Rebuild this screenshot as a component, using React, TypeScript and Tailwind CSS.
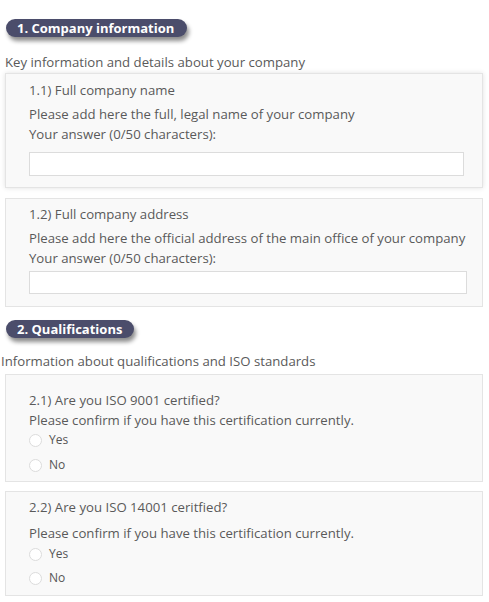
import React from "react";

const font = { fontFamily: '"Open Sans", "Liberation Sans", sans-serif' };

function Badge({ children, w }: { children: React.ReactNode; w: string }) {
  return (
    <div
      className={`ml-[6px] h-[18px] ${w} rounded-full bg-[#4b4d6b] pl-[11px] text-[13px] font-bold leading-[18px] text-white shadow-[2px_4px_4px_rgba(0,0,0,0.45)]`}
    >
      {children}
    </div>
  );
}

function Radio({ label, cls }: { label: string; cls: string }) {
  return (
    <div className={`flex h-[20px] items-center gap-[7px] ${cls}`}>
      <span className="h-[13px] w-[13px] rounded-full border border-[#dcdcdc] bg-white" />
      <span className="text-[12px] text-[#555]">{label}</span>
    </div>
  );
}

export default function App() {
  return (
    <div style={font} className="h-[602px] w-[489px] bg-white text-[13.2px] leading-[20px] text-[#5a5a5a]">
      <div className="pt-[19px]">
        <Badge w="w-[181px]">1. Company information</Badge>
      </div>
      <div className="mt-[15px] pl-[5px]">Key information and details about your company</div>

      <div className="ml-[5px] mt-[1px] w-[478px] border border-[#e4e4e4] bg-[#f9f9f9] pb-[11px] pl-[23px] pt-[6px] shadow-[0_0_5px_rgba(0,0,0,0.12)]">
        <div>1.1) Full company name</div>
        <div className="mt-[4px]">Please add here the full, legal name of your company</div>
        <div>Your answer (0/50 characters):</div>
        <div className="mt-[8px] h-[24px] w-[435px] border border-[#dcdcdc] bg-white" />
      </div>

      <div className="ml-[5px] mt-[10px] w-[478px] border border-[#e4e4e4] bg-[#f9f9f9] pb-[12px] pl-[23px] pt-[5px]">
        <div>1.2) Full company address</div>
        <div className="mt-[4px]">Please add here the official address of the main office of your company</div>
        <div>Your answer (0/50 characters):</div>
        <div className="mt-[3px] h-[23px] w-[438px] border border-[#dcdcdc] bg-white" />
      </div>

      <div className="pt-[13px]">
        <Badge w="w-[128px]">2. Qualifications</Badge>
      </div>
      <div className="mt-[13px] pl-[1px]">Information about qualifications and ISO standards</div>

      <div className="ml-[5px] mt-[3px] w-[478px] border border-[#e4e4e4] bg-[#f9f9f9] pb-[6px] pl-[23px] pt-[15px]">
        <div>2.1) Are you ISO 9001 certified?</div>
        <div>Please confirm if you have this certification currently.</div>
        <Radio label="Yes" cls="" />
        <Radio label="No" cls="mt-[5px]" />
      </div>

      <div className="ml-[5px] mt-[9px] w-[478px] border border-[#e4e4e4] bg-[#f9f9f9] pb-[7px] pl-[23px] pt-[5px]">
        <div>2.2) Are you ISO 14001 ceritfied?</div>
        <div className="mt-[6px]">Please confirm if you have this certification currently.</div>
        <Radio label="Yes" cls="mt-[1px]" />
        <Radio label="No" cls="mt-[4px]" />
      </div>
    </div>
  );
}
